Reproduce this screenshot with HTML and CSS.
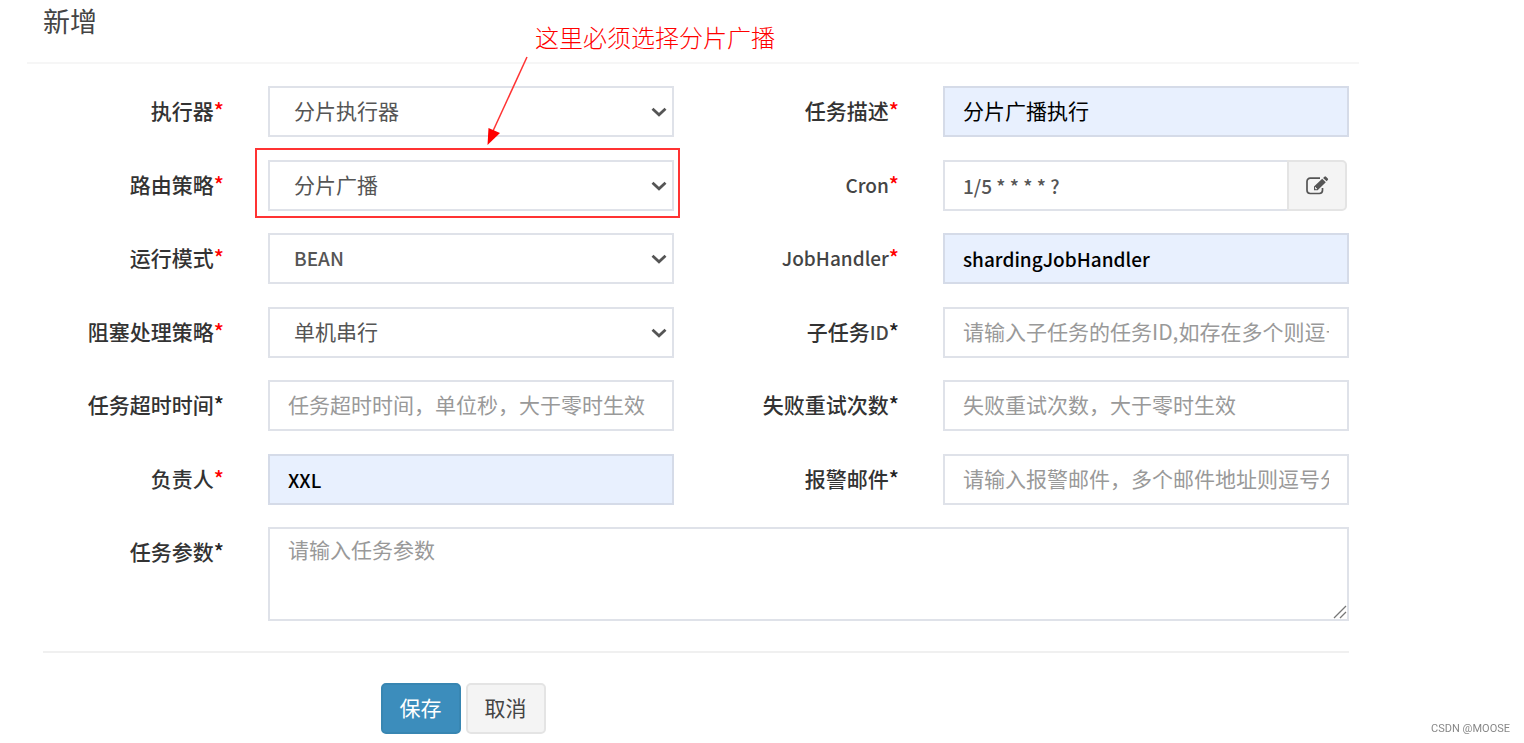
FILE: index.html
```html
<!DOCTYPE html>
<html lang="zh-CN">
<head>
<meta charset="utf-8">
<meta name="viewport" content="width=device-width, initial-scale=1">
<title>新增</title>
<link rel="stylesheet" href="styles.css">
</head>
<body>
<svg class="sprite" aria-hidden="true">
  <symbol id="chevron" viewBox="0 0 16 10"><path d="M1.500 1.800l6.500 6L14.500 1.800" fill="none" stroke="currentColor" stroke-width="2.800"/></symbol>
</svg>
<main class="modal">
  <header class="modal-header"><h1 class="modal-title">新增</h1></header>
  <form class="form">
    <div class="row">
      <label class="label" for="group">执行器<b class="star required">*</b></label>
      <div class="field">
        <select class="control select" id="group"><option>分片执行器</option></select>
        <svg class="chevron" aria-hidden="true"><use href="#chevron"/></svg>
      </div>
      <label class="label" for="desc">任务描述<b class="star required">*</b></label>
      <div class="field"><input class="control filled" id="desc" type="text" value="分片广播执行"></div>
    </div>
    <div class="row">
      <label class="label" for="route">路由策略<b class="star required">*</b></label>
      <div class="field">
        <select class="control select" id="route"><option>分片广播</option></select>
        <svg class="chevron" aria-hidden="true"><use href="#chevron"/></svg>
        <div class="highlight"></div>
        <svg class="arrow" viewBox="0 0 44 92" aria-hidden="true">
          <path d="M41 2L7 76" fill="none" stroke="#f33" stroke-width="1.5"/>
          <path d="M1.500 90L2.500 73L14 78Z" fill="#f00"/>
        </svg>
        <p class="note">这里必须选择分片广播</p>
      </div>
      <label class="label" for="cron"><span class="latin">Cron</span><b class="star required">*</b></label>
      <div class="field group">
        <input class="control latin-text" id="cron" type="text" value="1/5 * * * * ?">
        <button class="addon" type="button" aria-label="编辑">
          <svg class="edit" viewBox="0 0 24 20" aria-hidden="true">
            <path d="M15 2.2H5.2A3.2 3.2 0 0 0 2 5.400V14.300A3.200 3.200 0 0 0 5.200 17.500H14.300A3.200 3.200 0 0 0 17.500 14.300V12" fill="none" stroke="currentColor" stroke-width="1.700"/>
            <path d="M9 10.500L17.200 2.700L20.800 6.300L12.600 14.200H9ZM18.100 1.900L19.400 .700Q20.200 0 21 .700L22.800 2.500Q23.500 3.300 22.800 4.100L21.600 5.300Z" fill="currentColor"/>
            <path d="M10.500 11.200V12.700H12" fill="none" stroke="#f4f4f4" stroke-width="1"/>
          </svg>
        </button>
      </div>
    </div>
    <div class="row">
      <label class="label" for="mode">运行模式<b class="star required">*</b></label>
      <div class="field">
        <select class="control select latin-text" id="mode"><option>BEAN</option></select>
        <svg class="chevron" aria-hidden="true"><use href="#chevron"/></svg>
      </div>
      <label class="label" for="handler"><span class="latin">JobHandler</span><b class="star required">*</b></label>
      <div class="field"><input class="control filled latin-text" id="handler" type="text" value="shardingJobHandler"></div>
    </div>
    <div class="row">
      <label class="label" for="block">阻塞处理策略<b class="star required">*</b></label>
      <div class="field">
        <select class="control select" id="block"><option>单机串行</option></select>
        <svg class="chevron" aria-hidden="true"><use href="#chevron"/></svg>
      </div>
      <label class="label" for="child">子任务<span class="latin">ID</span><b class="star">*</b></label>
      <div class="field"><input class="control" id="child" type="text" placeholder="请输入子任务的任务ID,如存在多个则逗号分隔"></div>
    </div>
    <div class="row">
      <label class="label" for="timeout">任务超时时间<b class="star">*</b></label>
      <div class="field"><input class="control" id="timeout" type="text" placeholder="任务超时时间，单位秒，大于零时生效"></div>
      <label class="label" for="retry">失败重试次数<b class="star">*</b></label>
      <div class="field"><input class="control" id="retry" type="text" placeholder="失败重试次数，大于零时生效"></div>
    </div>
    <div class="row">
      <label class="label" for="owner">负责人<b class="star required">*</b></label>
      <div class="field"><input class="control filled latin-text" id="owner" type="text" value="XXL"></div>
      <label class="label" for="email">报警邮件<b class="star">*</b></label>
      <div class="field"><input class="control" id="email" type="text" placeholder="请输入报警邮件，多个邮件地址则逗号分隔"></div>
    </div>
    <div class="row">
      <label class="label" for="param">任务参数<b class="star">*</b></label>
      <div class="field wide">
        <textarea class="control area" id="param" placeholder="请输入任务参数"></textarea>
        <svg class="grip" viewBox="0 0 14 14" aria-hidden="true"><path d="M1 13L13 1M7 13L13 7" stroke="#777" stroke-width="1.300"/></svg>
      </div>
    </div>
    <hr class="divider">
    <div class="actions">
      <button class="btn primary" type="submit">保存</button>
      <button class="btn" type="button">取消</button>
    </div>
  </form>
</main>
<footer class="watermark">CSDN @MOOSE</footer>
</body>
</html>
```
FILE: styles.css
```css
* { box-sizing: border-box; }

body {
  margin: 0;
  background: #fff;
  color: #333;
  font-family: "Noto Sans CJK SC", sans-serif;
  font-size: 21px;
  line-height: 30px;
}

.sprite { position: absolute; width: 0; height: 0; }

.modal { margin: 0 153px 0 21px; }

.modal-header {
  margin: 0 12px 0 6px;
  padding: 1px 16px 22px;
  border-bottom: 2px solid #f6f6f6;
}

.modal-title {
  margin: 0;
  font-size: 27px;
  font-weight: 400;
  line-height: 39px;
  color: #444;
}

.form { padding-top: 22px; }

.row {
  display: grid;
  grid-template-columns: 2fr 4fr 2fr 4fr;
  margin-bottom: 22px;
}

.row:nth-child(odd) { margin-bottom: 23px; }

.label {
  padding: 9px 22px 0;
  text-align: right;
  font-weight: 500;
  white-space: nowrap;
}

.latin { font-size: 19px; color: #444; }

.star { font-weight: 500; color: #222; }
.required { color: #f00; }

.field {
  position: relative;
  min-width: 0;
  padding: 0 22px;
}

.wide { grid-column: span 3; }

.control {
  display: block;
  width: 100%;
  height: 51px;
  margin: 0;
  padding: 0 18px 3px;
  border: 2px solid #dfe2e9;
  border-radius: 0;
  background: #fff;
  color: #555;
  font: inherit;
}

.control::placeholder { color: #999; opacity: 1; }

.filled { border-color: #d5dbe8; background: #e8f0fe; color: #000; }

.latin-text { padding-bottom: 1px; font-size: 19px; font-weight: 500; }

.select { appearance: none; padding-left: 24px; padding-right: 24px; }

.chevron {
  position: absolute;
  top: 21px;
  right: 29px;
  width: 16px;
  height: 10px;
  color: #555;
  pointer-events: none;
}

.area { height: 94px; padding: 5px 18px; resize: vertical; }
.area::-webkit-resizer { display: none; }

.grip {
  position: absolute;
  right: 24px;
  bottom: 2px;
  width: 14px;
  height: 14px;
  pointer-events: none;
}

.group { display: flex; padding-right: 24px; }
.group .control { flex: 1; min-width: 0; border-right: 0; }

.addon {
  display: grid;
  place-items: center;
  width: 60px;
  padding: 0;
  border: 2px solid #e4e4e4;
  border-radius: 0 5px 5px 0;
  background: #f4f4f4;
  color: #555;
}

.edit { width: 24px; height: 20px; }

/* Callout drawn over the routing strategy field */
.highlight {
  position: absolute;
  inset: -12px 16px -7px 9px;
  border: 2px solid #f33;
  pointer-events: none;
}

.arrow {
  position: absolute;
  left: 240px;
  bottom: 64px;
  width: 44px;
  height: 92px;
  pointer-events: none;
}

.note {
  position: absolute;
  left: 289px;
  bottom: 156px;
  margin: 0;
  font-size: 24px;
  font-weight: 300;
  line-height: 36px;
  color: #f00;
  white-space: nowrap;
}

.divider {
  margin: 30px 22px;
  border: 0;
  border-top: 2px solid #f0f0f0;
}

.actions { display: flex; gap: 5px; padding-left: calc(25% + 22px); }

.btn {
  height: 51px;
  padding: 0 17px 3px;
  border: 2px solid #e4e4e4;
  border-radius: 5px;
  background: #f4f4f4;
  color: #444;
  font: inherit;
}

.primary { border-color: #3886b2; background: #3c8dbc; color: #fff; }

.watermark {
  position: fixed;
  right: 14px;
  bottom: 4px;
  font-family: Roboto, "Liberation Sans", sans-serif;
  font-size: 11px;
  line-height: 20px;
  color: #888;
}
```
